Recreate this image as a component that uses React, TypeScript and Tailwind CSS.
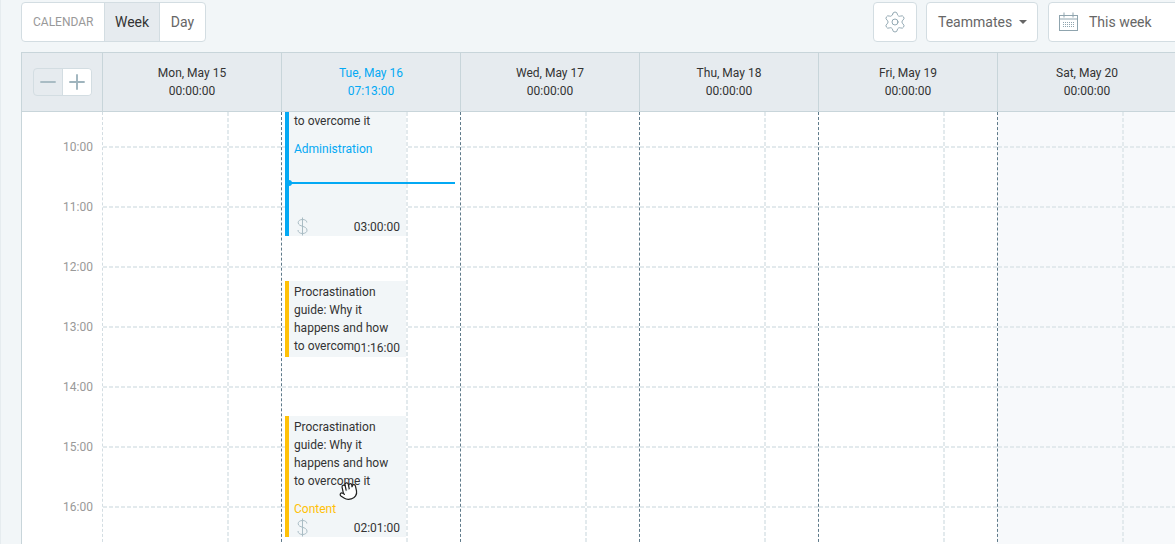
import { Hand, Minus, Plus, Settings } from "lucide-react";

const days = [
  { label: "Mon, May 15", time: "00:00:00" },
  { label: "Tue, May 16", time: "07:13:00", today: true },
  { label: "Wed, May 17", time: "00:00:00" },
  { label: "Thu, May 18", time: "00:00:00" },
  { label: "Fri, May 19", time: "00:00:00" },
  { label: "Sat, May 20", time: "00:00:00", weekend: true },
];

const hours = ["10:00", "11:00", "12:00", "13:00", "14:00", "15:00", "16:00"];

const taskLines = ["Procrastination", "guide: Why it", "happens and how", "to overcome it"];

const Dollar = () => (
  <svg width="11" height="19" viewBox="0 0 11 19" fill="none" stroke="#a9bcc4" strokeWidth="1">
    <path d="M5.5 0.5v18" />
    <path d="M9.8 5.5C9.8 3.5 8 2.5 5.5 2.5S1.2 3.7 1.2 5.7C1.2 10 10 8.5 10 13.2 10 15.3 8.2 16.5 5.5 16.5S1 15.2 1 13" />
  </svg>
);

const CalendarIcon = () => (
  <svg width="20" height="20" viewBox="0 0 20 20" fill="none" stroke="#8fa4ae" strokeWidth="1">
    <rect x="0.5" y="3.5" width="18" height="15" />
    <path d="M0.5 7h18M5 0.5v5M14 0.5v5" />
    <path d="M4 10.5h11M4 12.5h11M4 14.5h11" strokeDasharray="1 1" />
  </svg>
);

const HourRow = ({ height }: { height: string }) => (
  <div className={`flex flex-col ${height}`}>
    <div className="flex w-[126px] flex-1 justify-end">
      <div className="w-[2px] bg-[repeating-linear-gradient(180deg,#e3eaed_0_4px,transparent_4px_6px)]" />
    </div>
    <div className="h-[2px] bg-[repeating-linear-gradient(90deg,#e3eaed_0_4px,transparent_4px_6px)]" />
  </div>
);

type EventProps = {
  box: string;
  lines: string[];
  category?: string;
  categoryColor?: string;
  duration: string;
};

const CalendarEvent = ({ box, lines, category, categoryColor, duration }: EventProps) => (
  <div className={`absolute left-[3px] w-[121px] overflow-hidden border-l-4 bg-[#f2f6f8] pl-[5px] text-[#333] ${box}`}>
    {lines.map((line) => (
      <div key={line} className="h-[18px] whitespace-nowrap">
        {line}
      </div>
    ))}
    {category && <div className={`mt-[10px] h-[18px] ${categoryColor}`}>{category}</div>}
    {category && (
      <div className="absolute bottom-0 left-[8px] flex">
        <Dollar />
      </div>
    )}
    <div className="absolute bottom-0 right-[6px] bg-[#f2f6f8]">{duration}</div>
  </div>
);

const App = () => {
  return (
    <div className="h-[544px] w-[1175px] overflow-hidden border-l border-[#e6ecef] bg-[#f2f6f8] pl-[20px] pt-[2px] font-['Roboto',sans-serif] text-xs leading-[18px]">
      {/* Toolbar */}
      <div className="flex h-10 w-[1167px] justify-between">
        <div className="flex rounded-sm border border-[#d3dde2] bg-white text-sm">
          <div className="flex w-[82px] items-center pl-[11px] text-xs text-[#999]">CALENDAR</div>
          <div className="flex w-[56px] items-center justify-center border-x border-[#d3dde2] bg-[#e6ebef] text-[#333]">Week</div>
          <div className="flex w-[45px] items-center justify-center text-[#666]">Day</div>
        </div>
        <div className="flex gap-[9px] text-sm text-[#666]">
          <div className="flex w-[44px] items-center justify-center rounded-sm border border-[#d3dde2] bg-white">
            <Settings size={24} strokeWidth={0.85} color="#8199a5" />
          </div>
          <div className="mr-px flex w-[112px] items-center rounded-sm border border-[#d3dde2] bg-white pl-[11px]">
            Teammates
            <span className="ml-[7px] h-0 w-0 border-x-[4px] border-t-[4px] border-x-transparent border-t-[#666]" />
          </div>
          <div className="flex w-[140px] items-center rounded-sm border border-[#d3dde2] bg-white pl-[10px]">
            <CalendarIcon />
            <span className="ml-[10px]">This week</span>
          </div>
        </div>
      </div>

      {/* Day headers */}
      <div className="mt-[10px] flex h-[60px] w-[1160px] border border-r-0 border-[#c8d5da] bg-[#e6ebef] text-[#333]">
        <div className="flex w-[80px] flex-none items-center pl-[11px]">
          <div className="flex h-[28px] overflow-hidden rounded-sm border border-[#d3dde2]">
            <div className="flex w-[29px] items-center justify-center border-r border-[#d3dde2]">
              <Minus size={24} strokeWidth={1.9} color="#a9bcc4" />
            </div>
            <div className="flex w-[28px] items-center justify-center bg-white">
              <Plus size={24} strokeWidth={1.9} color="#9fb4bd" />
            </div>
          </div>
        </div>
        {days.map((day) => (
          <div
            key={day.label}
            className={`flex w-[179px] flex-none flex-col items-center justify-center border-l border-[#c8d5da] ${day.today ? "text-[#03a9f4]" : ""}`}
          >
            <div>{day.label}</div>
            <div>{day.time}</div>
          </div>
        ))}
      </div>

      {/* Time grid */}
      <div className="flex h-[440px] w-[1160px] overflow-hidden border-l border-[#c8d5da] bg-white">
        <div className="w-[80px] flex-none pr-[9px] pt-[26px] text-right text-[#999]">
          {hours.map((hour) => (
            <div key={hour} className="h-[60px]">
              {hour}
            </div>
          ))}
        </div>
        {days.map((day, i) => (
          <div
            key={day.label}
            className={`relative w-[179px] flex-none border-l border-dashed ${i === 0 ? "border-[#d3dde2]" : "border-[#5f7a8a]"} ${day.weekend ? "bg-[#f7f9fb]" : ""}`}
          >
            <HourRow height="h-[36px]" />
            {hours.map((hour) => (
              <HourRow key={hour} height="h-[60px]" />
            ))}

            {day.today && (
              <>
                <CalendarEvent
                  box="top-0 h-[124px] border-[#03a9f4]"
                  lines={["to overcome it"]}
                  category="Administration"
                  categoryColor="text-[#03a9f4]"
                  duration="03:00:00"
                />
                <CalendarEvent box="top-[169px] h-[76px] border-[#ffc107] pt-[2px]" lines={taskLines} duration="01:16:00" />
                <CalendarEvent
                  box="top-[304px] h-[121px] border-[#ffc107] pt-[2px]"
                  lines={taskLines}
                  category="Content"
                  categoryColor="text-[#ffc107]"
                  duration="02:01:00"
                />
                {/* current time marker */}
                <div className="absolute left-[6px] top-[70px] h-[2px] w-[167px] bg-[#03a9f4]" />
                <div className="absolute left-[4px] top-[68px] h-[6px] w-[6px] rounded-full bg-[#03a9f4]" />
                {/* mouse pointer */}
                <div className="absolute left-[56px] top-[369px] -rotate-12">
                  <Hand size={20} strokeWidth={1.5} color="#222" fill="#fff" />
                </div>
              </>
            )}
          </div>
        ))}
      </div>
    </div>
  );
};

export default App;
